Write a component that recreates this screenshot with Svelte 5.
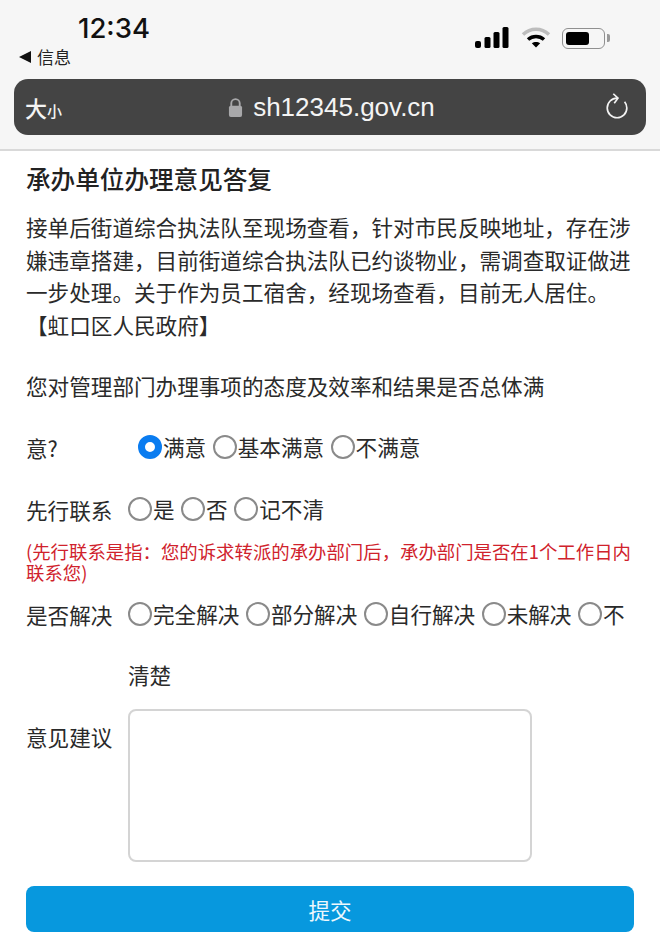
<script lang="ts">
  const answers = [
    { label: '先行联系', options: ['是', '否', '记不清'] },
  ]
  const solved = ['完全解决', '部分解决', '自行解决', '未解决', '不']
</script>

<div class="page">
  <header class="top">
    <div class="status">
      <div class="left">
        <div class="time">12:34</div>
        <div class="back"><span class="tri"></span>信息</div>
      </div>
      <div class="icons">
        <svg class="signal" width="34" height="22" viewBox="0 0 34 22" fill="#000">
          <rect x="0" y="14" width="6" height="7" rx="2" />
          <rect x="9.500" y="10" width="6" height="11" rx="1.500" />
          <rect x="18.500" y="5" width="6" height="16" rx="1.500" />
          <rect x="27.500" y="0" width="6" height="21" rx="1.500" />
        </svg>
        <svg class="wifi" width="30" height="22" viewBox="0 0 30 22" fill="none" stroke-linecap="butt">
          <path d="M2 7.500C9.500 0.500 20.500 0.500 28 7.500" stroke="#bdbdbd" stroke-width="3.500" />
          <path d="M7 12.500C11.500 8.500 18.500 8.500 23 12.500" stroke="#000" stroke-width="3.500" />
          <path d="M15 20.500L10.800 16.300C13.200 14.400 16.800 14.400 19.200 16.300Z" fill="#000" />
        </svg>
        <div class="battery"><div class="charge"></div></div>
        <div class="nub"></div>
      </div>
    </div>
    <div class="urlbar">
      <div class="aa">大<small>小</small></div>
      <div class="url">
        <svg width="15" height="21" viewBox="0 0 16 21">
          <path d="M3.500 9V6a4.500 4.500 0 0 1 9 0v3" fill="none" stroke="#a8a8aa" stroke-width="2" />
          <rect x="1" y="8.500" width="14" height="12" rx="2" fill="#a8a8aa" />
        </svg>
        <span>sh12345.gov.cn</span>
      </div>
      <svg class="reload" width="25" height="28" viewBox="0 0 26 30" fill="none" stroke="#f4f4f4" stroke-width="1.800">
        <path d="M12.500 5.500A10.500 10.500 0 1 0 23 16c0-2.600-.9-4.900-2.400-6.700" />
        <path d="M8.500 0.800L13.500 5.500L9.500 11" />
      </svg>
    </div>
  </header>

  <main>
    <h2>承办单位办理意见答复</h2>
    <p class="reply">接单后街道综合执法队至现场查看，针对市民反映地址，存在涉嫌违章搭建，目前街道综合执法队已约谈物业，需调查取证做进一步处理。关于作为员工宿舍，经现场查看，目前无人居住。<br />【虹口区人民政府】</p>

    <p class="ask">您对管理部门办理事项的态度及效率和结果是否总体满</p>

    <div class="row first">
      <span class="name short">意?</span>
      <div class="opts">
        <label><span class="radio on"></span>满意</label>
        <label><span class="radio"></span>基本满意</label>
        <label><span class="radio"></span>不满意</label>
      </div>
    </div>

    {#each answers as a}
      <div class="row second">
        <span class="name">{a.label}</span>
        <div class="opts">
          {#each a.options as o}
            <label><span class="radio"></span>{o}</label>
          {/each}
        </div>
      </div>
    {/each}

    <p class="note">(先行联系是指：您的诉求转派的承办部门后，承办部门是否在1个工作日内联系您)</p>

    <div class="row third">
      <span class="name">是否解决</span>
      <div class="opts">
        {#each solved as o}
          <label><span class="radio"></span>{o}</label>
        {/each}
      </div>
    </div>
    <div class="wrapped">清楚</div>

    <div class="row advice">
      <span class="name">意见建议</span>
      <div class="box"></div>
    </div>

    <button type="button">提交</button>
  </main>
</div>

<style>
  :global(body) {
    margin: 0;
    background: #fff;
  }

  .page {
    width: 660px;
    height: 949px;
    overflow: hidden;
    color: #2a2a2a;
    font-family: "Noto Sans CJK SC", "Liberation Sans", sans-serif;
  }

  .top {
    height: 151px;
    box-sizing: border-box;
    background: #f6f6f6;
    border-bottom: 2px solid #d9d9d9;
  }

  .status {
    display: flex;
    justify-content: space-between;
    height: 79px;
    box-sizing: border-box;
    padding: 12px 0 0 19px;
  }

  .time {
    margin-left: 59px;
    font: 500 27.500px/32px Inter, "Liberation Sans", sans-serif;
    color: #111;
  }

  .back {
    display: flex;
    align-items: center;
    gap: 6px;
    margin-top: 3px;
    font-size: 17px;
    line-height: 20px;
    color: #222;
  }

  .tri {
    width: 0;
    height: 0;
    border: 6px solid transparent;
    border-left: 0;
    border-right: 12px solid #111;
  }

  .icons {
    display: flex;
    align-items: center;
    height: 26px;
    margin: 13px 50px 0 0;
  }

  .signal {
    margin-right: 12px;
  }
  .wifi {
    margin-right: 11px;
  }

  .battery {
    width: 43px;
    height: 21px;
    box-sizing: border-box;
    padding: 3px;
    border: 1.500px solid #909090;
    border-radius: 6px;
  }
  .charge {
    width: 23px;
    height: 100%;
    background: #000;
    border-radius: 3px;
  }
  .nub {
    width: 3px;
    height: 8px;
    margin-left: 2px;
    background: #999;
    border-radius: 0 2px 2px 0;
  }

  .urlbar {
    display: grid;
    grid-template-columns: 1fr auto 1fr;
    align-items: center;
    height: 56px;
    margin: 0 14px;
    padding: 0 16px 0 11px;
    background: #444;
    border-radius: 14px;
    color: #f4f4f4;
  }

  .aa {
    font-size: 22px;
    font-weight: 500;
    line-height: 1;
  }
  .aa small {
    font-size: 15px;
  }

  .url {
    display: flex;
    align-items: center;
    gap: 10px;
    margin-left: 8px;
    font: 26px "Liberation Sans", sans-serif;
  }

  .reload {
    justify-self: end;
  }

  main {
    padding: 0 26px;
    font-size: 21.600px;
  }

  h2 {
    margin: 11px 0 0;
    font-size: 24.600px;
    font-weight: 500;
    line-height: 32px;
    color: #222;
  }

  .reply {
    margin: 17px 0 0;
    width: 608px;
    line-height: 32.500px;
  }

  .ask {
    margin: 27px 0 0;
    line-height: 36px;
  }

  .row {
    display: flex;
    align-items: center;
  }
  .row.first {
    margin-top: 25px;
  }
  .row.second {
    margin-top: 26px;
  }
  .row.third {
    margin-top: 13.500px;
  }

  .name {
    flex: none;
    width: 102px;
  }
  .name.short {
    width: 112px;
  }

  .opts {
    display: flex;
    gap: 6.500px;
    white-space: nowrap;
  }

  label {
    display: flex;
    align-items: center;
    line-height: 36px;
  }

  .radio {
    width: 24px;
    height: 24px;
    margin-right: 1px;
    box-sizing: border-box;
    border: 2px solid #8a8a8a;
    border-radius: 50%;
    background: #fff;
  }
  .radio.on {
    border: 7px solid #0a7cf0;
  }

  .note {
    margin: 13.500px 0 0;
    font-size: 18.400px;
    line-height: 21px;
    color: #d0222c;
  }

  .wrapped {
    margin: 25px 0 0 102px;
    line-height: 36px;
  }

  .row.advice {
    align-items: flex-start;
    margin-top: 16px;
  }
  .advice .name {
    margin-top: 10px;
    line-height: 36px;
  }

  .box {
    width: 404px;
    height: 153px;
    box-sizing: border-box;
    border: 2px solid #d4d4d4;
    border-radius: 8px;
  }

  button {
    display: block;
    width: 608px;
    height: 46px;
    margin-top: 24px;
    padding: 0;
    border: 0;
    border-radius: 8px;
    background: #0798de;
    color: #eef8fd;
    font: inherit;
    font-size: 21.600px;
  }
</style>
